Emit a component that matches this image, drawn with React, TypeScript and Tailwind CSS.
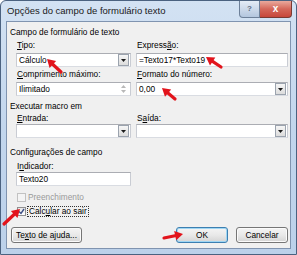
import React from "react";

const FONT = { fontFamily: '"Liberation Sans", Arial, sans-serif' };

function Arrow({ x1, y1, x2, y2 }: { x1: number; y1: number; x2: number; y2: number }) {
  const dx = x2 - x1;
  const dy = y2 - y1;
  const len = Math.hypot(dx, dy);
  const ux = dx / len;
  const uy = dy / len;
  const headLen = 8;
  const headW = 4.8;
  const bx = x2 - ux * headLen;
  const by = y2 - uy * headLen;
  const px = -uy;
  const py = ux;
  return (
    <g>
      <line x1={x1} y1={y1} x2={bx + ux} y2={by + uy} stroke="#e2141c" strokeWidth={3.2} strokeLinecap="round" />
      <polygon
        points={`${x2},${y2} ${bx + px * headW},${by + py * headW} ${bx - px * headW},${by - py * headW}`}
        fill="#e2141c"
      />
    </g>
  );
}

function DropBtn() {
  return (
    <div className="ml-auto mr-[1px] flex h-[12px] w-[11px] items-center justify-center border border-[#9ba3ae] bg-gradient-to-b from-[#f6f6f6] to-[#dcdcdc]">
      <svg width="5" height="3" viewBox="0 0 5 3">
        <polygon points="0,0 5,0 2.5,3" fill="#1a1a1a" />
      </svg>
    </div>
  );
}

function Spinner() {
  return (
    <div className="ml-auto mr-[1px] flex h-[12px] w-[11px] flex-col items-center justify-center gap-[2px]">
      <svg width="5" height="3" viewBox="0 0 5 3">
        <polygon points="0,3 5,3 2.5,0" fill="#b8b8b8" />
      </svg>
      <svg width="5" height="3" viewBox="0 0 5 3">
        <polygon points="0,0 5,0 2.5,3" fill="#b8b8b8" />
      </svg>
    </div>
  );
}

function Box({ children, kind }: { children?: React.ReactNode; kind?: "drop" | "spin" }) {
  return (
    <div className="flex h-[14px] items-center border border-[#abadb3] border-l-[#c9ccd3] border-r-[#c9ccd3] border-b-[#d9dce2] bg-white pl-[2px] text-[8.3px] leading-[10px] text-black">
      <span>{children}</span>
      {kind === "drop" && <DropBtn />}
      {kind === "spin" && <Spinner />}
    </div>
  );
}

function Label({ children }: { children: React.ReactNode }) {
  return <div className="h-[10px] pl-[1px] text-[8.3px] leading-[10px] text-black">{children}</div>;
}

function Btn({ children, w, focus }: { children: React.ReactNode; w: string; focus?: boolean }) {
  return (
    <div
      className={
        "flex h-[16px] items-center justify-center rounded-[3px] border bg-gradient-to-b from-[#f4f4f4] via-[#e9e9e9] to-[#d4d4d4] text-[8.3px] leading-[10px] text-black " +
        w +
        (focus
          ? " border-[#3c7fb1] shadow-[inset_0_0_0_1px_#9fd6f3]"
          : " border-[#767676] shadow-[inset_0_0_0_1px_#fbfbfb]")
      }
    >
      {children}
    </div>
  );
}

export default function App() {
  return (
    <div className="relative h-[255px] w-[297px] overflow-hidden bg-white" style={FONT}>
      <div className="flex h-full w-full flex-col rounded-t-[6px] border border-[#4b6280] bg-gradient-to-b from-[#d3e2f3] via-[#c2d6ed] to-[#bcd1ea]">
        {/* title bar */}
        <div className="flex h-[20px] items-start">
          <div className="pl-[6px] pt-[4px] text-[9.5px] leading-[12px] text-[#1a1a1a]">
            Opções do campo de formulário texto
          </div>
          <div className="ml-auto mr-[4px] flex">
            <div className="flex h-[17px] w-[21px] items-center justify-center rounded-bl-[4px] border border-t-0 border-[#6d8099] bg-gradient-to-b from-[#e4ecf6] via-[#ccd9ea] to-[#b3c6de] text-[8px] font-bold leading-[10px] text-[#5b6b80]">
              ?
            </div>
            <div className="flex h-[17px] w-[32px] items-center justify-center rounded-br-[4px] border border-l-0 border-t-0 border-[#7a3a33] bg-gradient-to-b from-[#e9a99d] via-[#d4675a] to-[#c7463a] text-[10px] font-bold leading-[10px] text-white">
              x
            </div>
          </div>
        </div>
        {/* client */}
        <div className="mx-[5px] flex flex-1 flex-col border border-[#8094b0] bg-[#f0f0f0]">
          <div className="mt-[5px] h-[10px] pl-[3px] text-[8.3px] leading-[10px] text-black">Campo de formulário de texto</div>
          <div className="ml-[9px] mt-[3px] grid grid-cols-[115px_152px] gap-x-[5px]">
            <div className="flex flex-col gap-[3px]">
              <Label>
                <u>T</u>ipo:
              </Label>
              <Box kind="drop">Cálculo</Box>
            </div>
            <div className="flex flex-col gap-[3px]">
              <Label>
                Express<u>ã</u>o:
              </Label>
              <Box>=Texto17*Texto19</Box>
            </div>
          </div>
          <div className="ml-[9px] mt-[2px] grid grid-cols-[115px_152px] gap-x-[5px]">
            <div className="flex flex-col gap-[3px]">
              <Label>
                <u>C</u>omprimento máximo:
              </Label>
              <Box kind="spin">Ilimitado</Box>
            </div>
            <div className="flex flex-col gap-[3px]">
              <Label>
                <u>F</u>ormato do número:
              </Label>
              <Box kind="drop">0,00</Box>
            </div>
          </div>
          <div className="mt-[5px] h-[10px] pl-[3px] text-[8.3px] leading-[10px] text-black">Executar macro em</div>
          <div className="ml-[9px] mt-[2px] grid grid-cols-[115px_152px] gap-x-[5px]">
            <div className="flex flex-col gap-[1px]">
              <Label>
                <u>E</u>ntrada:
              </Label>
              <Box kind="drop" />
            </div>
            <div className="flex flex-col gap-[1px]">
              <Label>
                S<u>a</u>ída:
              </Label>
              <Box kind="drop" />
            </div>
          </div>
          <div className="mt-[9px] h-[10px] pl-[3px] text-[8.3px] leading-[10px] text-black">Configurações de campo</div>
          <div className="ml-[9px] mt-[4px] flex w-[115px] flex-col gap-[1px]">
            <Label>
              I<u>n</u>dicador:
            </Label>
            <Box>Texto20</Box>
          </div>
          <div className="ml-[10px] mt-[6px] flex h-[10px] items-center gap-[2px]">
            <div className="h-[9px] w-[9px] border border-[#c2c2c2] bg-[#f4f4f4]" />
            <span className="text-[8.3px] leading-[10px] text-[#9a9a9a]">Preenchimento</span>
          </div>
          <div className="ml-[10px] mt-[4px] flex h-[11px] items-center gap-[1px]">
            <div className="flex h-[9px] w-[9px] items-center justify-center border border-[#8f8f8f] bg-gradient-to-b from-[#e6e6e6] to-[#ffffff]">
              <svg width="7" height="7" viewBox="0 0 7 7">
                <path d="M1 3.5 L3 5.5 L6 1" stroke="#3d4f86" strokeWidth="1.4" fill="none" />
              </svg>
            </div>
            <span className="border border-dotted border-[#333] px-[1px] text-[8.3px] leading-[9px] text-black">
              Calc<u>u</u>lar ao sair
            </span>
          </div>
          <div className="mt-[10px] flex items-center pl-[4px] pr-[2px]">
            <Btn w="w-[71px]">
              Te<u>x</u>to de ajuda...
            </Btn>
            <div className="ml-auto flex gap-[8px]">
              <Btn w="w-[52px]" focus>
                OK
              </Btn>
              <Btn w="w-[52px]">Cancelar</Btn>
            </div>
          </div>
        </div>
        <div className="h-[5px]" />
      </div>
      <svg className="pointer-events-none absolute left-0 top-0" width="297" height="255" viewBox="0 0 297 255">
        <Arrow x1={61} y1={72} x2={47} y2={59} />
        <Arrow x1={221} y1={67} x2={206} y2={57} />
        <Arrow x1={175} y1={99} x2={162} y2={88} />
        <Arrow x1={4} y1={224} x2={20} y2={209} />
        <Arrow x1={164} y1={238} x2={183} y2={234} />
      </svg>
    </div>
  );
}
